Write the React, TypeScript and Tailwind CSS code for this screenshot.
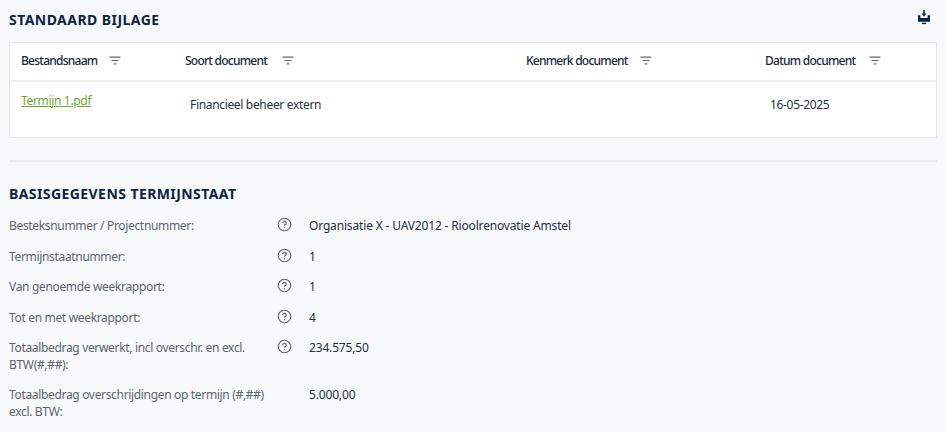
import type { ReactNode } from "react";
import { CircleHelp } from "lucide-react";

const FilterIcon = () => (
  <svg width="12" height="10" viewBox="0 0 12 10" className="text-[#5f6b78]">
    <path d="M0.5 1.2h11M2.5 4.5h7M4.7 7.8h2.6" stroke="currentColor" strokeWidth="1.2" fill="none" />
  </svg>
);

const DownloadIcon = () => (
  <svg width="12" height="15" viewBox="0 0 12 15" className="text-[#0b2440]">
    <path d="M6 0v5" stroke="currentColor" strokeWidth="1.6" fill="none" />
    <path d="M3.6 3.6h4.8L6 6.8z" fill="currentColor" />
    <path d="M0 5.2h2.4v2.9h7.2V5.2H12v6.5H0z" fill="currentColor" />
    <path d="M3.8 13.4h4.4" stroke="currentColor" strokeWidth="1.4" fill="none" />
  </svg>
);

const HeaderCell = ({ label, width, gap }: { label: string; width: string; gap: string }) => (
  <div className={`flex items-center ${gap} ${width}`}>
    <span className="text-[12px] font-medium tracking-[-0.75px] text-[#15293f]">{label}</span>
    <FilterIcon />
  </div>
);

const Row = ({ label, help = true, height, children }: { label: ReactNode; help?: boolean; height: string; children: ReactNode }) => (
  <div className={`flex ${height}`}>
    <div className="w-[269px] text-[12px] leading-[17px] tracking-[-0.33px] text-[#5b6570]">{label}</div>
    <div className="w-[32px]">
      {help && <CircleHelp size={15} strokeWidth={1.8} className="-ml-[1px] text-[#5b6570]" />}
    </div>
    <div className="-ml-[1px] text-[12px] leading-[17px] tracking-[-0.16px] text-[#1c2f44]">{children}</div>
  </div>
);

export default function App() {
  return (
    <div className="h-[432px] w-[945px] overflow-hidden bg-[#f7f8fa] pl-[9px] pr-2 font-['Noto_Sans','Open_Sans',sans-serif]">
      <div className="flex h-[42px] items-start justify-between pr-[7px] pt-[10px]">
        <h2 className="mt-px text-[14px] font-bold leading-[18px] tracking-[0.45px] text-[#0b2440]">STANDAARD BIJLAGE</h2>
        <DownloadIcon />
      </div>

      <div className="h-[96px] border border-[#e4e6e9] bg-white">
        <div className="flex h-[39px] items-center border-b-2 border-[#eceef0] pb-[2px] pl-[11px]">
          <HeaderCell label="Bestandsnaam" width="w-[164px]" gap="gap-[12px]" />
          <HeaderCell label="Soort document" width="w-[341px]" gap="gap-[15px]" />
          <HeaderCell label="Kenmerk document" width="w-[239px]" gap="gap-[12px]" />
          <HeaderCell label="Datum document" width="w-[170px]" gap="gap-[14px]" />
        </div>
        <div className="flex pl-[11px] text-[12px] leading-[17px] tracking-[-0.33px] text-[#26313c]">
          <div className="w-[164px] pt-[10px]">
            <a href="#" className="text-[#6aa82e] underline">Termijn 1.pdf</a>
          </div>
          <div className="w-[580px] pl-[5px] pt-[14px]">Financieel beheer extern</div>
          <div className="pl-[5px] pt-[14px]">16-05-2025</div>
        </div>
      </div>

      <div className="mt-[22px] h-[2px] bg-[#eaecee]" />

      <h2 className="mt-[23px] text-[14px] font-bold leading-[18px] tracking-[0.42px] text-[#0b2440]">BASISGEGEVENS TERMIJNSTAAT</h2>

      <div className="mt-[14px]">
        <Row label="Besteksnummer / Projectnummer:" height="h-[31px]">Organisatie X - UAV2012 - Rioolrenovatie Amstel</Row>
        <Row label="Termijnstaatnummer:" height="h-[30px]">1</Row>
        <Row label="Van genoemde weekrapport:" height="h-[31px]">1</Row>
        <Row label="Tot en met weekrapport:" height="h-[30px]">4</Row>
        <Row label="Totaalbedrag verwerkt, incl overschr. en excl. BTW(#,##):" height="h-[47px]">234.575,50</Row>
        <Row label="Totaalbedrag overschrijdingen op termijn (#,##) excl. BTW:" help={false} height="h-[47px]">5.000,00</Row>
      </div>
    </div>
  );
}
